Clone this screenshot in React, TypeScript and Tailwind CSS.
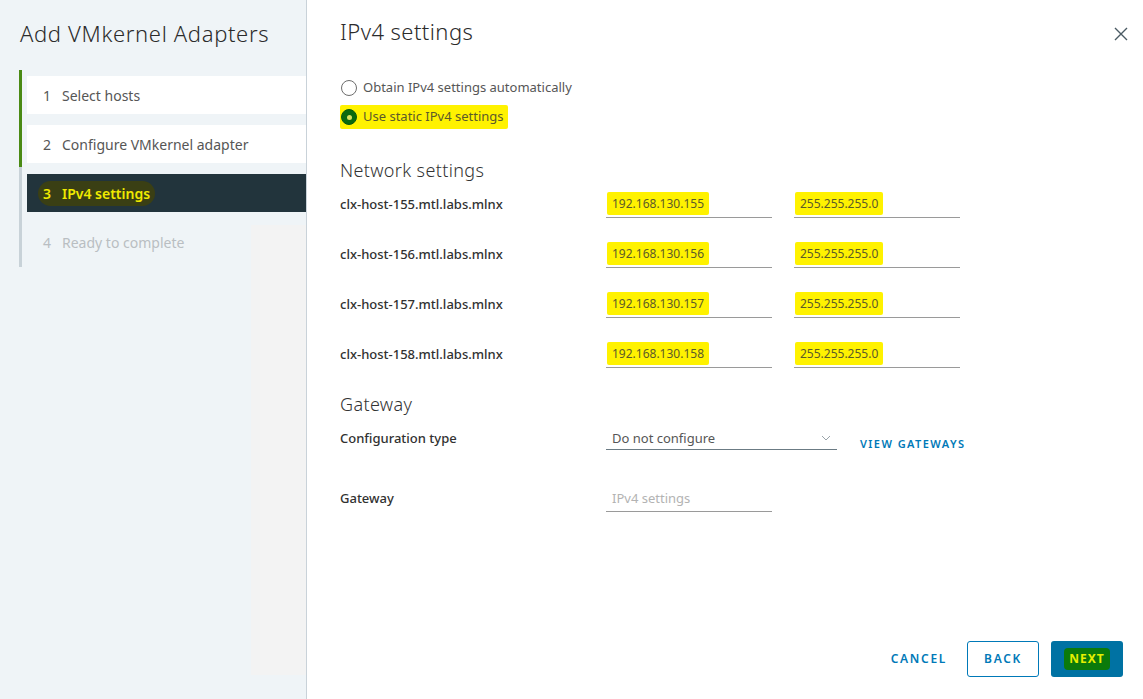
import React from "react";

const FONT = { fontFamily: '"Noto Sans", "Open Sans", Arial, sans-serif' };

const hosts = [
  { name: "clx-host-155.mtl.labs.mlnx", ip: "192.168.130.155" },
  { name: "clx-host-156.mtl.labs.mlnx", ip: "192.168.130.156" },
  { name: "clx-host-157.mtl.labs.mlnx", ip: "192.168.130.157" },
  { name: "clx-host-158.mtl.labs.mlnx", ip: "192.168.130.158" },
];

function Hl({ children }: { children: React.ReactNode }) {
  return (
    <span className="bg-[#fff200] text-[#5c5a2a] -mx-[5px] px-[5px] py-[3px] rounded-[2px]">
      {children}
    </span>
  );
}

export default function App() {
  return (
    <div className="w-[1143px] h-[699px] flex bg-white overflow-hidden" style={FONT}>
      {/* Left nav */}
      <div className="relative w-[307px] h-full bg-[#eff4f7] border-r border-[#c9d2d9] flex flex-col">
        <div className="absolute left-[251px] top-[225px] w-[55px] h-[450px] bg-[#f3f3f3]" />
        <div className="relative pt-[18px] pl-[20px] text-[22px] leading-[30px] font-light tracking-[0.03em] text-[#2b2b2b]">
          Add VMkernel Adapters
        </div>
        <div className="relative mt-[22px] ml-[19px] flex">
          <div className="w-[3px] flex flex-col">
            <div className="h-[97px] bg-[#4a8a14]" />
            <div className="flex-1 bg-[#c8d2d8]" />
          </div>
          <div className="flex-1 pl-[5px] pt-[6px] pb-[6px] flex flex-col gap-[11px]">
            <div className="h-[38px] bg-white flex items-center pl-[16px] text-[14px] text-[#565656]">
              <span className="w-[19px]">1</span>Select hosts
            </div>
            <div className="h-[38px] bg-white flex items-center pl-[16px] text-[14px] text-[#565656]">
              <span className="w-[19px]">2</span>Configure VMkernel adapter
            </div>
            <div className="h-[38px] bg-[#22343c] flex items-center pl-[11px] text-[14px] font-semibold text-[#f0ea00]">
              <span className="bg-[#3a3f14] rounded-full px-[5px] py-[2px] flex">
                <span className="w-[19px]">3</span>IPv4 settings
              </span>
            </div>
            <div className="h-[38px] flex items-center pl-[16px] text-[14px] text-[#b9bec2]">
              <span className="w-[19px]">4</span>Ready to complete
            </div>
          </div>
        </div>
      </div>

      {/* Right content */}
      <div className="flex-1 h-full flex flex-col pl-[33px]">
        <div className="flex justify-between pr-[15px]">
          <div className="pt-[16px] text-[22px] leading-[30px] font-light tracking-[0.02em] text-[#2b2b2b]">IPv4 settings</div>
          <svg className="mt-[27px]" width="14" height="14" viewBox="0 0 14 14">
            <path d="M1 1 L13 13 M13 1 L1 13" stroke="#4a5a63" strokeWidth="1.4" />
          </svg>
        </div>

        <div className="mt-[31px] h-[22px] flex items-center text-[13px] text-[#565656]">
          <span className="w-[16px] h-[16px] rounded-full border border-[#6d6d6d] bg-white mr-[6px] ml-[1px]" />
          Obtain IPv4 settings automatically
        </div>
        <div className="mt-[7px] h-[22px] flex items-center text-[13px]">
          <span className="flex items-center bg-[#fff200] text-[#5c5a2a] pl-[1px] pr-[4px] py-[2px] rounded-[2px]">
            <span className="w-[16px] h-[16px] rounded-full bg-[#0b6a0e] border border-[#0a5a0c] mr-[6px] flex items-center justify-center">
              <span className="w-[5px] h-[5px] rounded-full bg-[#d8e060]" />
            </span>
            Use static IPv4 settings
          </span>
        </div>

        <div className="mt-[29px] h-[26px] leading-[26px] text-[18px] font-light tracking-[0.02em] text-[#333]">Network settings</div>

        <div className="mt-[4px] flex flex-col">
          {hosts.map((h) => (
            <div key={h.name} className="h-[50px] flex items-start text-[13px]">
              <div className="w-[266px] pt-[9px] leading-[16px] font-medium text-[#313131]">{h.name}</div>
              <div className="w-[166px] pt-[9px] pb-[5px] leading-[16px] border-b border-[#9a9a9a] pl-[6px] text-[12px] text-[#565656]">
                <Hl>{h.ip}</Hl>
              </div>
              <div className="w-[166px] ml-[22px] pt-[9px] pb-[5px] leading-[16px] border-b border-[#9a9a9a] pl-[6px] text-[12px] text-[#565656]">
                <Hl>255.255.255.0</Hl>
              </div>
            </div>
          ))}
        </div>

        <div className="mt-[4px] h-[26px] leading-[26px] text-[18px] font-light tracking-[0.02em] text-[#333]">Gateway</div>

        <div className="mt-[4px] flex items-start text-[13px]">
          <div className="w-[266px] pt-[9px] leading-[16px] font-medium text-[#313131]">Configuration type</div>
          <div className="w-[231px] pt-[9px] pb-[3px] leading-[16px] border-b border-[#6b7b84] pl-[6px] pr-[6px] text-[#565656] flex justify-between items-center">
            <span>Do not configure</span>
            <svg width="10" height="6" viewBox="0 0 10 6">
              <path d="M1 1 L5 5 L9 1" stroke="#9aa4aa" strokeWidth="1" fill="none" />
            </svg>
          </div>
          <div className="ml-[23px] pt-[17px] leading-[12px] text-[11px] font-semibold tracking-[0.13em] text-[#0079b8]">
            VIEW GATEWAYS
          </div>
        </div>

        <div className="mt-[31px] flex items-start text-[13px]">
          <div className="w-[266px] pt-[9px] leading-[16px] font-medium text-[#313131]">Gateway</div>
          <div className="w-[166px] pt-[9px] pb-[5px] leading-[16px] border-b border-[#9a9a9a] pl-[6px] text-[#b3b3b3]">
            IPv4 settings
          </div>
        </div>

        <div className="mt-auto pb-[22px] pr-[20px] flex justify-end items-center">
          <button className="h-[36px] px-[12px] mr-[8px] text-[12px] font-semibold tracking-[0.14em] text-[#0079b8]">
            CANCEL
          </button>
          <button className="h-[36px] w-[72px] border border-[#0079b8] rounded-[3px] text-[12px] font-semibold tracking-[0.14em] text-[#0079b8] bg-white">
            BACK
          </button>
          <button className="ml-[12px] h-[36px] w-[72px] rounded-[3px] bg-[#0072a3] flex items-center justify-center">
            <span className="bg-[#0b7a0b] rounded-[4px] px-[5px] py-[2px] text-[12px] font-bold tracking-[0.08em] text-[#e6f000]">
              NEXT
            </span>
          </button>
        </div>
      </div>
    </div>
  );
}
